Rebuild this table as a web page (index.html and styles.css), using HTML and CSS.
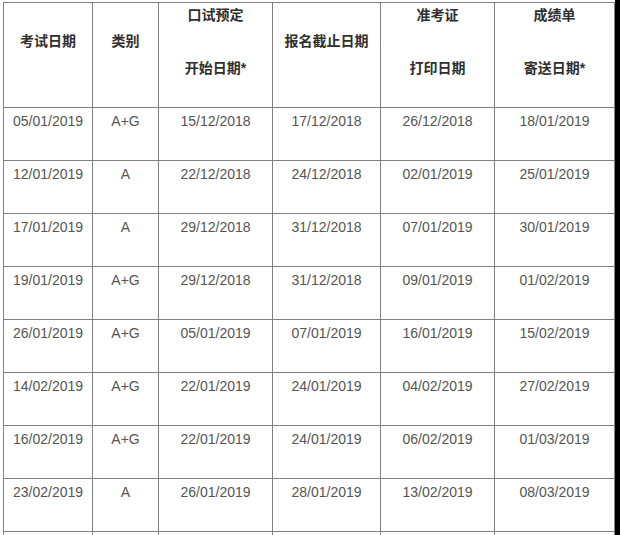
FILE: index.html
```html
<!DOCTYPE html>
<html lang="zh-CN">
<head>
<meta charset="utf-8">
<title>考试日期表</title>
<link rel="stylesheet" href="styles.css">
</head>
<body>
<div class="page">
  <table class="schedule">
    <colgroup>
      <col class="c1"><col class="c2"><col class="c3"><col class="c4"><col class="c5"><col class="c6">
    </colgroup>
    <thead>
      <tr>
        <th><div class="single">考试日期</div></th>
        <th><div class="single">类别</div></th>
        <th><div class="l1">口试预定</div><div class="l2">开始日期*</div></th>
        <th><div class="single">报名截止日期</div></th>
        <th><div class="l1">准考证</div><div class="l2">打印日期</div></th>
        <th><div class="l1">成绩单</div><div class="l2">寄送日期*</div></th>
      </tr>
    </thead>
    <tbody>
      <tr><td>05/01/2019</td><td>A+G</td><td>15/12/2018</td><td>17/12/2018</td><td>26/12/2018</td><td>18/01/2019</td></tr>
      <tr><td>12/01/2019</td><td>A</td><td>22/12/2018</td><td>24/12/2018</td><td>02/01/2019</td><td>25/01/2019</td></tr>
      <tr><td>17/01/2019</td><td>A</td><td>29/12/2018</td><td>31/12/2018</td><td>07/01/2019</td><td>30/01/2019</td></tr>
      <tr><td>19/01/2019</td><td>A+G</td><td>29/12/2018</td><td>31/12/2018</td><td>09/01/2019</td><td>01/02/2019</td></tr>
      <tr><td>26/01/2019</td><td>A+G</td><td>05/01/2019</td><td>07/01/2019</td><td>16/01/2019</td><td>15/02/2019</td></tr>
      <tr><td>14/02/2019</td><td>A+G</td><td>22/01/2019</td><td>24/01/2019</td><td>04/02/2019</td><td>27/02/2019</td></tr>
      <tr><td>16/02/2019</td><td>A+G</td><td>22/01/2019</td><td>24/01/2019</td><td>06/02/2019</td><td>01/03/2019</td></tr>
      <tr><td>23/02/2019</td><td>A</td><td>26/01/2019</td><td>28/01/2019</td><td>13/02/2019</td><td>08/03/2019</td></tr>
      <tr class="cut"><td></td><td></td><td></td><td></td><td></td><td></td></tr>
    </tbody>
  </table>
  <div class="edge"></div>
</div>
</body>
</html>
```
FILE: styles.css
```css
html, body {
  margin: 0;
  padding: 0;
  background: #ffffff;
  overflow: hidden;
}

.page {
  display: flex;
  justify-content: space-between;
  align-items: flex-start;
  width: 620px;
  height: 535px;
  overflow: hidden;
}

.schedule {
  margin: 2px 0 0 3px;
  border-collapse: collapse;
  table-layout: fixed;
  width: 611px;
  font-family: "Liberation Sans", "Noto Sans CJK SC", sans-serif;
  font-size: 14px;
  flex: none;
}

.c1 { width: 89px; }
.c2 { width: 66px; }
.c3 { width: 114px; }
.c4 { width: 108px; }
.c5 { width: 114px; }
.c6 { width: 120px; }

.schedule th,
.schedule td {
  border: 1px solid #808080;
  text-align: center;
  vertical-align: top;
  padding: 0;
  line-height: 20px;
}

.schedule th {
  height: 104px;
  font-weight: bold;
  color: #2f2f2f;
}

.single {
  padding-top: 28px;
}

.l1 {
  padding-top: 2px;
}

.l2 {
  margin-top: 33px;
}

.schedule td {
  height: 49px;
  padding-top: 3px;
  color: #555555;
}

.edge {
  width: 5px;
  height: 535px;
  background: #000000;
  flex: none;
}
```
